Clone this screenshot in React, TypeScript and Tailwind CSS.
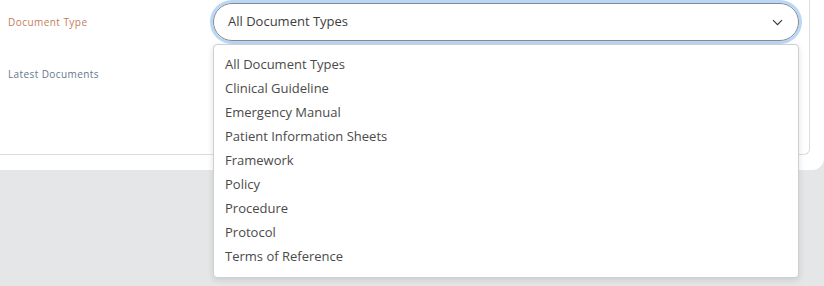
const types = [
  "All Document Types",
  "Clinical Guideline",
  "Emergency Manual",
  "Patient Information Sheets",
  "Framework",
  "Policy",
  "Procedure",
  "Protocol",
  "Terms of Reference",
];

const font = { fontFamily: "'Open Sans', 'DejaVu Sans', sans-serif" };

export default function App() {
  return (
    <div className="h-[286px] w-[824px] overflow-hidden bg-[#e5e6e8]" style={font}>
      <div className="h-[170px] rounded-br-[12px] bg-white">
        <div className="relative h-[155px] w-[810px] rounded-br-[6px] border-b border-r border-[#dcdcdc] bg-white">
          <div className="flex flex-col">
            <div className="flex h-[44px] items-center">
              <div className="w-[213px] pl-2 text-[10px] tracking-[0.45px] text-[#c27d60]">Document Type</div>
              <div className="flex h-[38px] w-[586px] items-center justify-between rounded-full border border-[#8a8a8a] pl-[14px] pr-[15px] shadow-[0_0_0_3px_#b9d7f7]">
                <span className="text-[13px] text-[#3d3d3d]">All Document Types</span>
                <svg width="11" height="7" viewBox="0 0 11 7" fill="none" stroke="#333" strokeWidth="1.1">
                  <path d="M1 1.2l4.5 4.5 4.5-4.5" />
                </svg>
              </div>
            </div>
            <div className="mt-[10px] flex h-[38px] items-center">
              <div className="w-[213px] pl-2 pt-[2px] text-[10px] tracking-[0.4px] text-[#64788d]">Latest Documents</div>
              <div className="h-[38px] w-[586px] rounded-full border border-[#777]"></div>
            </div>
            <div className="mt-[12px] flex h-[38px] items-center">
              <div className="w-[213px]"></div>
              <div className="h-[38px] w-[586px] rounded-full border border-[#4f6f78]"></div>
            </div>
          </div>

          <div className="absolute left-[213px] top-[44px] w-[586px] rounded-[4px] border border-[#cfcfcf] bg-white py-2 shadow-[0_2px_6px_rgba(0,0,0,0.12)]">
            {types.map((t) => (
              <div key={t} className="flex h-[24px] items-center pl-[11px] text-[13px] text-[#4a4a4a]">
                {t}
              </div>
            ))}
          </div>
        </div>
      </div>
    </div>
  );
}
